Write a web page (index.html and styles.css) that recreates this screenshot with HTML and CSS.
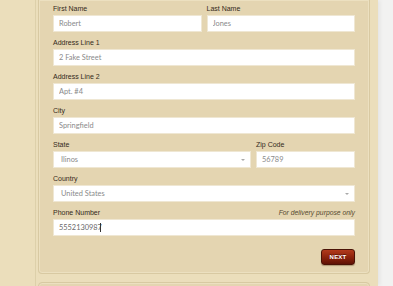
FILE: index.html
```html
<!DOCTYPE html>
<html>
<head>
  <title>Shipping Address</title>
  <link rel="stylesheet" href="styles.css">
</head>
<body>
  <div class="page">
    <div class="column">
      <form class="panel" id="addressForm">
        <div class="row">
          <div class="field half">
            <label for="first">First Name</label>
            <input type="text" id="first" value="Robert">
          </div>
          <div class="field half">
            <label for="last">Last Name</label>
            <input type="text" id="last" value="Jones">
          </div>
        </div>

        <div class="field">
          <label for="addr1">Address Line 1</label>
          <input type="text" id="addr1" value="2 Fake Street">
        </div>

        <div class="field">
          <label for="addr2">Address Line 2</label>
          <input type="text" id="addr2" value="Apt. #4">
        </div>

        <div class="field">
          <label for="city">City</label>
          <input type="text" id="city" value="Springfield">
        </div>

        <div class="row">
          <div class="field state">
            <label for="state">State</label>
            <div class="select-wrap">
              <select id="state">
                <option>Ilinos</option>
              </select>
            </div>
          </div>
          <div class="field zip">
            <label for="zip">Zip Code</label>
            <input type="text" id="zip" value="56789">
          </div>
        </div>

        <div class="field">
          <label for="country">Country</label>
          <div class="select-wrap">
            <select id="country">
              <option>United States</option>
            </select>
          </div>
        </div>

        <div class="field">
          <div class="label-row">
            <label for="phone">Phone Number</label>
            <span class="note">For delivery purpose only</span>
          </div>
          <div class="caret-wrap">
            <input type="text" id="phone" class="dark" value="5552130987">
            <span class="caret"></span>
          </div>
        </div>

        <div class="actions">
          <button type="submit" class="next">NEXT</button>
        </div>
      </form>

      <div class="panel next-panel"></div>
    </div>
  </div>
</body>
</html>
```

FILE: styles.css
```css
body {
  margin: 0;
  background-color: #f2f2f1;
  font-family: "Liberation Sans", Arial, sans-serif;
}

.page {
  width: 378px;
  height: 286px;
  overflow: hidden;
  background-color: #ebdebb;
  box-shadow: 2px 0 4px rgba(0, 0, 0, 0.06);
}

.column {
  margin-left: 35px;
  padding-left: 2px;
  margin-right: 8px;
  border-left: 1px solid #ddd0aa;
  height: 286px;
}

.panel {
  background-color: #e4d5b1;
  border: 1px solid #d8c9a2;
  border-top: none;
  border-radius: 0 0 4px 4px;
  box-shadow: inset 0 0 0 1px #ece0c0;
  padding: 4px 14px 8px 14px;
  margin: 0;
}

.next-panel {
  margin-top: 8px;
  height: 20px;
  border-top: 1px solid #d8c9a2;
  border-radius: 4px 4px 0 0;
}

.row {
  display: flex;
  gap: 5px;
}

.field {
  margin-bottom: 6px;
}

.half {
  flex: 1;
}

.state {
  width: 198px;
}

.zip {
  flex: 1;
}

label,
.note {
  display: block;
  font-size: 7px;
  line-height: 9px;
  color: #33291a;
  margin-bottom: 2px;
}

.label-row {
  display: flex;
  justify-content: space-between;
}

.note {
  font-style: italic;
  font-size: 6.8px;
  color: #55492f;
}

input[type="text"],
select {
  display: block;
  box-sizing: border-box;
  width: 100%;
  height: 17px;
  padding: 0 5px;
  margin: 0;
  border: 1px solid #efe7d3;
  border-radius: 0;
  background-color: #fff;
  font-family: Lato, "Open Sans", sans-serif;
  font-size: 7.4px;
  color: #8a8a8a;
  outline: none;
}

input.dark {
  color: #6a6a6a;
}

select {
  -webkit-appearance: none;
  appearance: none;
  padding-left: 7px;
}

.select-wrap,
.caret-wrap {
  position: relative;
}

.select-wrap::after {
  content: "";
  position: absolute;
  right: 6px;
  top: 8px;
  border-left: 2px solid transparent;
  border-right: 2px solid transparent;
  border-top: 2px solid #a9a9a9;
}

.caret {
  position: absolute;
  left: 47px;
  top: 4px;
  width: 1px;
  height: 9px;
  background-color: #333;
}

.actions {
  display: flex;
  justify-content: flex-end;
  margin-top: 13px;
}

.next {
  width: 34px;
  height: 16px;
  padding: 0;
  border: 1px solid #4a1206;
  border-radius: 3px;
  background: linear-gradient(#b23a1c, #8a210b 55%, #5f1205);
  box-shadow: 0 1px 1px rgba(80, 40, 10, 0.35);
  color: #fff;
  font-family: "Liberation Sans", Arial, sans-serif;
  font-size: 6px;
  font-weight: bold;
  letter-spacing: 0.2px;
  text-shadow: 0 -1px 0 rgba(0, 0, 0, 0.4);
  cursor: pointer;
}
```
